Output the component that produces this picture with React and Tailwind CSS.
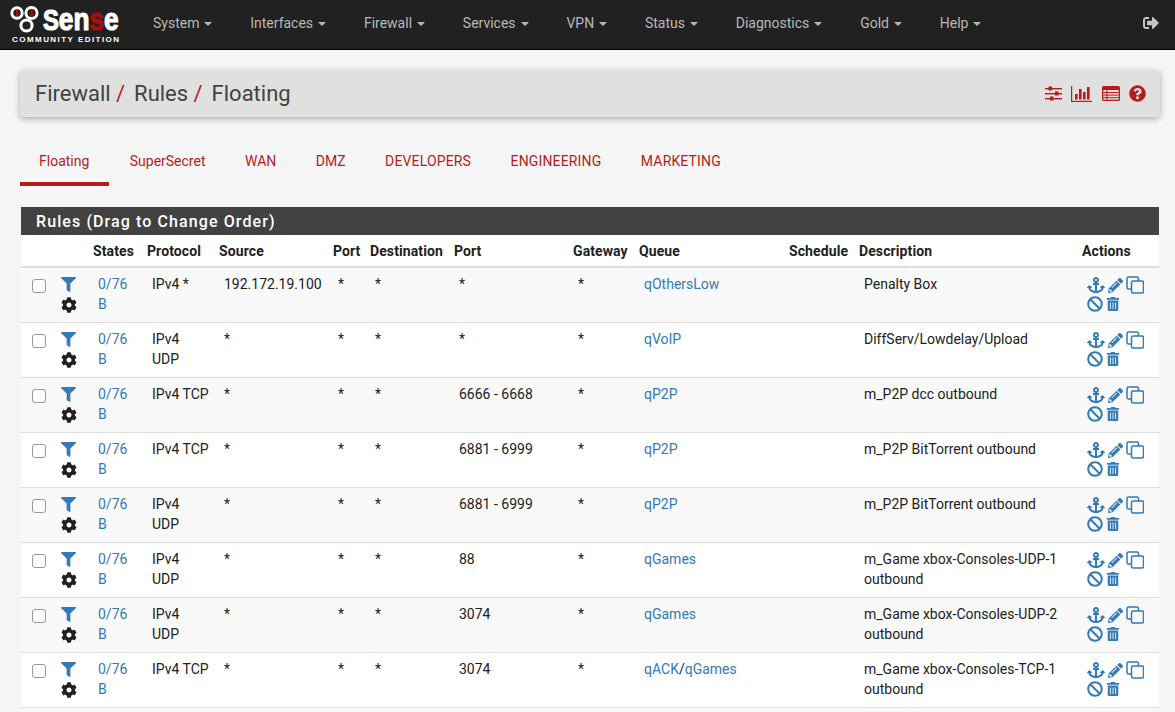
import { FaFilter, FaCog, FaAnchor, FaPencilAlt, FaBan, FaTrashAlt, FaQuestionCircle, FaSignOutAlt } from 'react-icons/fa';

const MENU = ['System', 'Interfaces', 'Firewall', 'Services', 'VPN', 'Status', 'Diagnostics', 'Gold', 'Help'];
const TABS = ['Floating', 'SuperSecret', 'WAN', 'DMZ', 'DEVELOPERS', 'ENGINEERING', 'MARKETING'];
const COLUMNS = [
  ['', 'w-[35px]'],
  ['', 'w-[32px]'],
  ['States', 'w-[54px]'],
  ['Protocol', 'w-[72px]'],
  ['Source', 'w-[114px]'],
  ['Port', 'w-[37px]'],
  ['Destination', 'w-[84px]'],
  ['Port', 'w-[119px]'],
  ['Gateway', 'w-[66px]'],
  ['Queue', 'w-[150px]'],
  ['Schedule', 'w-[70px]'],
  ['Description', 'w-[223px]'],
  ['Actions', 'w-[82px]'],
];

const RULES = [
  { proto: 'IPv4 *', source: '192.172.19.100', port: '*', queue: ['qOthersLow'], desc: 'Penalty Box' },
  { proto: 'IPv4 UDP', source: '*', port: '*', queue: ['qVoIP'], desc: 'DiffServ/Lowdelay/Upload' },
  { proto: 'IPv4 TCP', source: '*', port: '6666 - 6668', queue: ['qP2P'], desc: 'm_P2P dcc outbound' },
  { proto: 'IPv4 TCP', source: '*', port: '6881 - 6999', queue: ['qP2P'], desc: 'm_P2P BitTorrent outbound' },
  { proto: 'IPv4 UDP', source: '*', port: '6881 - 6999', queue: ['qP2P'], desc: 'm_P2P BitTorrent outbound' },
  { proto: 'IPv4 UDP', source: '*', port: '88', queue: ['qGames'], desc: 'm_Game xbox-Consoles-UDP-1 outbound' },
  { proto: 'IPv4 UDP', source: '*', port: '3074', queue: ['qGames'], desc: 'm_Game xbox-Consoles-UDP-2 outbound' },
  { proto: 'IPv4 TCP', source: '*', port: '3074', queue: ['qACK', 'qGames'], desc: 'm_Game xbox-Consoles-TCP-1 outbound' },
];

function Logo() {
  return (
    <div className="flex flex-col w-[112px] ml-[10px] shrink-0">
      <div className="flex items-end h-[28px] whitespace-nowrap">
        <svg width="33" height="28" viewBox="0 0 33 28" className="shrink-0">
          <g fill="none" stroke="#fff" strokeWidth="3">
            <circle cx="7" cy="8" r="5.2" />
            <circle cx="21.5" cy="8" r="5.6" />
            <circle cx="16.5" cy="20.5" r="5.6" />
          </g>
          <rect x="6" y="5" width="2.4" height="6" fill="#a50f0f" />
          <rect x="20.5" y="4.5" width="2.4" height="6.5" fill="#a50f0f" />
        </svg>
        <span className="inline-block font-['Liberation_Sans'] font-bold text-[29px] leading-[26px] text-white origin-left scale-x-[0.82] [-webkit-text-stroke:1.2px_#fff]">
          S<span className="text-[32px]">en<span className="text-[#a50f0f] [-webkit-text-stroke:1.2px_#a50f0f]">s</span>e</span>
        </span>
      </div>
      <div className="font-['Liberation_Sans'] font-bold text-[8px] leading-[10px] tracking-[1.45px] text-white whitespace-nowrap mt-[2px] pl-[2px]">
        COMMUNITY EDITION
      </div>
    </div>
  );
}

function Navbar() {
  return (
    <div className="flex items-center h-[50px] bg-[#212121] border-b border-black">
      <Logo />
      <div className="flex items-center gap-[37.8px] ml-[31px] pb-[3px] text-[#b8b8b8]">
        {MENU.map(m => (
          <div key={m} className="flex items-center gap-[5px]">
            {m}
            <span className="w-0 h-0 mt-[2px] border-x-4 border-t-4 border-x-transparent border-t-[#b8b8b8]" />
          </div>
        ))}
      </div>
      <FaSignOutAlt className="ml-auto mr-[16px] mb-[3px] text-[16px] text-[#c4c4c4]" />
    </div>
  );
}

function SlidersIcon() {
  return (
    <svg width="17" height="15" viewBox="0 0 17 15" fill="#b71c1c">
      <rect y="2" width="17" height="1.4" />
      <rect y="7" width="17" height="1.4" />
      <rect y="12" width="17" height="1.4" />
      <rect x="3.5" y="0.5" width="3.5" height="4" />
      <rect x="10" y="5.5" width="3.5" height="4" />
      <rect x="5" y="10.5" width="3.5" height="4" />
    </svg>
  );
}

function ChartIcon() {
  return (
    <svg width="21" height="16" viewBox="0 0 21 16" fill="#b71c1c" className="mr-px">
      <rect width="1.2" height="16" />
      <rect y="14.8" width="21" height="1.2" />
      <rect x="4" y="8" width="2.6" height="5.5" />
      <rect x="8" y="3" width="2.6" height="10.5" />
      <rect x="12" y="6" width="2.6" height="7.5" />
      <rect x="16" y="1" width="2.6" height="12.5" />
    </svg>
  );
}

function ListAltIcon() {
  return (
    <svg width="18" height="15" viewBox="0 0 18 15">
      <rect width="18" height="15" rx="1.5" fill="#b71c1c" />
      <rect x="1.3" y="4" width="15.4" height="9.7" fill="#eadcdc" />
      <g fill="#b71c1c">
        <rect x="1.3" y="6" width="15.4" height="1" />
        <rect x="1.3" y="8.6" width="15.4" height="1" />
        <rect x="1.3" y="11.2" width="15.4" height="1" />
        <rect x="4.4" y="4" width="1" height="9.7" />
      </g>
    </svg>
  );
}

function CloneIcon() {
  return (
    <svg width="18" height="18" viewBox="0 0 18 18" fill="none" stroke="#337ab7" strokeWidth="1.5">
      <rect x="5.5" y="5" width="12" height="12" rx="1.5" />
      <path d="M5 13H2.5A1.5 1.5 0 0 1 1 11.5V2.5A1.5 1.5 0 0 1 2.5 1H11A1.5 1.5 0 0 1 12.5 2.5V5" />
    </svg>
  );
}

function Breadcrumb() {
  return (
    <div className="flex items-center justify-between h-[47px] ml-5 mr-[15px] mt-5 px-[15px] rounded bg-[#e0e0e0] shadow-[0_2px_6px_rgba(0,0,0,0.3)]">
      <div className="text-[22px] leading-none text-[#424242] whitespace-pre">
        Firewall<span className="text-[#b71c1c] mr-[-2px]"> / </span> Rules<span className="text-[#b71c1c] mr-[-2px]"> / </span> Floating
      </div>
      <div className="flex items-center gap-[9px] -mr-px">
        <SlidersIcon />
        <ChartIcon />
        <ListAltIcon />
        <FaQuestionCircle className="text-[17px] text-[#b71c1c]" />
      </div>
    </div>
  );
}

function Tabs() {
  return (
    <div className="flex ml-5 mt-[21px] text-[#b71c1c]">
      {TABS.map((t, i) => (
        <div
          key={t}
          className={i === 0
            ? 'w-[89px] pl-[19px] mr-px pt-[13px] pb-[15px] h-[48px] border-b-4 border-[#b71c1c]'
            : i > 3
              ? 'px-[19.75px] pt-[13px] pb-[15px] h-[48px] tracking-[0.15px]'
              : 'px-[19.75px] pt-[13px] pb-[15px] h-[48px]'}
        >
          {t}
        </div>
      ))}
    </div>
  );
}

function RuleRow({ rule, striped }) {
  const cell = 'align-top pt-[6px] pb-[8px] pl-[10px] pr-[5px] border-b border-[#ddd]';
  return (
    <tr className={striped ? 'h-[55px] bg-[#f9f9f9]' : 'h-[55px] bg-white'}>
      <td className="align-top pt-[11px] pl-[11px] border-b border-[#ddd]">
        <input type="checkbox" className="block w-[14px] h-[14px] appearance-none bg-[#fdfdfd] border border-[#999] rounded-[3px]" />
      </td>
      <td className="align-top pt-[9px] pl-[5px] border-b border-[#ddd]">
        <FaFilter className="text-[#337ab7] text-[15px]" />
        <FaCog className="text-[#212121] text-[16px] mt-[5px]" />
      </td>
      <td className={cell}><a className="text-[#337ab7]">0/76 B</a></td>
      <td className={cell}>{rule.proto}</td>
      <td className={cell}>{rule.source}</td>
      <td className={cell}>*</td>
      <td className={cell}>*</td>
      <td className={cell}>{rule.port}</td>
      <td className={cell}>*</td>
      <td className={cell}>
        {rule.queue.map((q, i) => (
          <span key={q}>{i > 0 && '/'}<a className="text-[#337ab7]">{q}</a></span>
        ))}
      </td>
      <td className={cell}></td>
      <td className={cell}>{rule.desc}</td>
      <td className="align-top pt-[8px] pl-[10px] border-b border-[#ddd] text-[#337ab7]">
        <div className="flex items-center gap-[3px] h-[18px]">
          <FaAnchor className="text-[18px]" />
          <FaPencilAlt className="text-[15px]" />
          <CloneIcon />
        </div>
        <div className="flex items-center gap-[3px] h-[16px] mt-[2px]">
          <FaBan className="text-[16px]" />
          <FaTrashAlt className="text-[14px]" />
        </div>
      </td>
    </tr>
  );
}

function RulesPanel() {
  return (
    <div className="ml-[21px] mr-[16px] mt-[21px] bg-white">
      <div className="h-[28px] px-[15px] bg-[#424242] text-white text-base font-medium leading-[29px] tracking-[1.1px]">
        Rules (Drag to Change Order)
      </div>
      <table className="w-[1138px] table-fixed border-collapse text-[#212121]">
        <colgroup>
          {COLUMNS.map(([, w], i) => <col key={i} className={w} />)}
        </colgroup>
        <thead>
          <tr className="h-[32px]">
            {COLUMNS.map(([label], i) => (
              <th key={i} className="pl-[5px] text-left font-bold whitespace-nowrap tracking-[0.1px] border-b-2 border-[#ddd]">{label}</th>
            ))}
          </tr>
        </thead>
        <tbody>
          {RULES.map((r, i) => <RuleRow key={i} rule={r} striped={i % 2 === 0} />)}
          <tr className="h-[55px] bg-[#f9f9f9]"><td colSpan={13}></td></tr>
        </tbody>
      </table>
    </div>
  );
}

export default function App() {
  return (
    <div className="h-screen overflow-hidden bg-[#f5f5f5] text-sm leading-5 text-[#212121] font-['Roboto',sans-serif]">
      <Navbar />
      <Breadcrumb />
      <Tabs />
      <RulesPanel />
    </div>
  );
}
